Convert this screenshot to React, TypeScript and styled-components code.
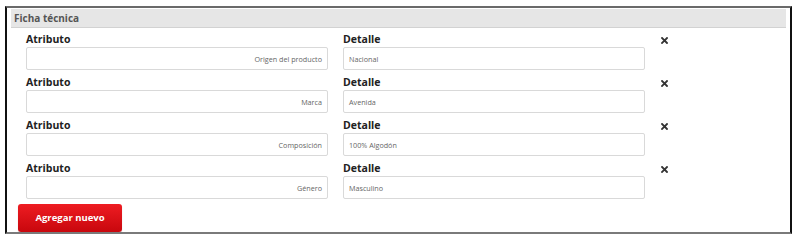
import React from "react";
import styled, { createGlobalStyle } from "styled-components";

const Global = createGlobalStyle`
  html, body { margin: 0; padding: 0; background: #fff; }
  body { font-family: "Open Sans", "Liberation Sans", Arial, sans-serif; }
`;

const Frame = styled.div`
  box-sizing: border-box;
  margin: 6px 0 0 5px;
  width: 787px;
  height: 228px;
  border-left: 2px solid #111;
  border-right: 2px solid #111;
  border-top: 2px solid #6a6a6a;
  border-bottom: 2px solid #7a7a7a;
  padding: 1px 4px 0 4px;
  overflow: hidden;
`;

const Header = styled.div`
  height: 18px;
  background: #e6e6e6;
  border-bottom: 1px solid #d2d2d2;
  display: flex;
  align-items: center;
  padding-left: 3px;
  font-size: 10px;
  font-weight: 700;
  color: #555;
`;

const List = styled.div`
  display: flex;
  flex-direction: column;
  gap: 5px;
  padding: 4px 0 0 15px;
`;

const Row = styled.div`
  display: flex;
  align-items: flex-start;
`;

const Field = styled.div<{ $gap?: number }>`
  display: flex;
  flex-direction: column;
  width: 302px;
  margin-right: ${(p) => p.$gap ?? 0}px;
`;

const Label = styled.div`
  font-size: 10.5px;
  font-weight: 700;
  color: #222;
  line-height: 14px;
  height: 15px;
`;

const Input = styled.div<{ $right?: boolean }>`
  box-sizing: border-box;
  height: 23px;
  border: 1px solid #d9d9d9;
  border-radius: 2px;
  background: #fff;
  display: flex;
  align-items: center;
  justify-content: ${(p) => (p.$right ? "flex-end" : "flex-start")};
  padding: 0 5px;
  font-size: 7.2px;
  color: #666;
`;

const Remove = styled.div`
  width: 8px;
  margin-left: 15px;
  padding-top: 5px;
  display: flex;
  justify-content: center;
`;

const Button = styled.button`
  margin: 5px 0 0 7px;
  width: 104px;
  height: 28px;
  border: none;
  border-radius: 3px;
  background: linear-gradient(#ee1c22, #c8070d);
  color: #fff;
  font-family: "Open Sans", "Liberation Sans", Arial, sans-serif;
  font-weight: 700;
  font-size: 9.5px;
  padding: 0 0 2px 0;
  box-shadow: 0 1px 1px rgba(0, 0, 0, 0.25);
`;

const XIcon = () => (
  <svg width="7" height="7" viewBox="0 0 7 7">
    <path d="M1 1 L6 6 M6 1 L1 6" stroke="#333" strokeWidth="1.8" strokeLinecap="square" />
  </svg>
);

const rows = [
  { a: "Origen del producto", d: "Nacional" },
  { a: "Marca", d: "Avenida" },
  { a: "Composición", d: "100% Algodón" },
  { a: "Género", d: "Masculino" },
];

export default function App() {
  return (
    <>
      <Global />
      <Frame>
        <Header>Ficha técnica</Header>
        <List>
          {rows.map((r) => (
            <Row key={r.a}>
              <Field $gap={15}>
                <Label>Atributo</Label>
                <Input $right>{r.a}</Input>
              </Field>
              <Field>
                <Label>Detalle</Label>
                <Input>{r.d}</Input>
              </Field>
              <Remove>
                <XIcon />
              </Remove>
            </Row>
          ))}
        </List>
        <Button>Agregar nuevo</Button>
      </Frame>
    </>
  );
}
